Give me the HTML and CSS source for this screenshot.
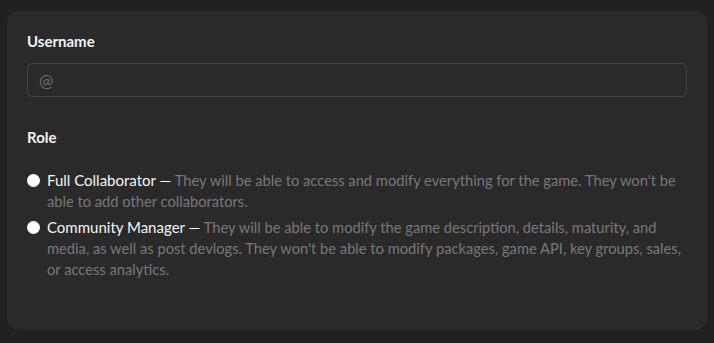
FILE: index.html
```html
<!DOCTYPE html>
<html lang="en">
<head>
    <meta charset="UTF-8">
    <title>Collaborator</title>
    <link rel="stylesheet" href="styles.css">
</head>
<body>
    <div class="panel">
        <div class="form-group">
            <label class="form-label" for="username">Username</label>
            <input type="text" id="username" class="form-control" placeholder="@">
        </div>

        <div class="form-group">
            <div class="form-label role-label">Role</div>

            <label class="radio">
                <span class="radio-dot"></span>
                <span class="radio-text">
                    <span class="radio-title">Full Collaborator —</span>
                    They will be able to access and modify everything for the game. They won't be able&nbsp;to add other collaborators.
                </span>
            </label>

            <label class="radio">
                <span class="radio-dot"></span>
                <span class="radio-text">
                    <span class="radio-title">Community Manager —</span>
                    They will be able to modify the game description, details, maturity, and media, as well as post devlogs. They won't be able to modify packages, game API, key groups, sales, or access analytics.
                </span>
            </label>
        </div>
    </div>
</body>
</html>
```

FILE: styles.css
```css
body {
    margin: 0;
    padding: 11px 7px 13px;
    background-color: #212121;
    font-family: Lato, "Open Sans", sans-serif;
    font-size: 15px;
}
.panel {
    background: #2a2a2a;
    border-radius: 12px;
    padding: 20px 20px 44px;
    height: 255px;
}
.form-group {
    margin-bottom: 30px;
}
.form-label {
    display: block;
    color: #f2f2f2;
    font-weight: bold;
    font-size: 15px;
    line-height: 20px;
    margin-bottom: 12px;
}
.role-label {
    margin-bottom: 23px;
}
.form-control {
    display: block;
    box-sizing: border-box;
    width: 100%;
    height: 34px;
    padding: 0 11px;
    background: #2a2a2a;
    border: 1px solid #464646;
    border-radius: 6px;
    color: #ddd;
    font-family: inherit;
    font-size: 17px;
}
.form-control::placeholder {
    color: #6a6a6a;
}
.radio {
    display: flex;
    gap: 7px;
    line-height: 21px;
    margin-bottom: 5px;
}
.radio-dot {
    flex: none;
    width: 13px;
    height: 13px;
    margin-top: 4px;
    border-radius: 50%;
    background: #fff;
}
.radio-text {
    color: #787878;
    font-size: 14.7px;
}
.radio-title {
    color: #f5f5f5;
    font-size: 15px;
}
```
